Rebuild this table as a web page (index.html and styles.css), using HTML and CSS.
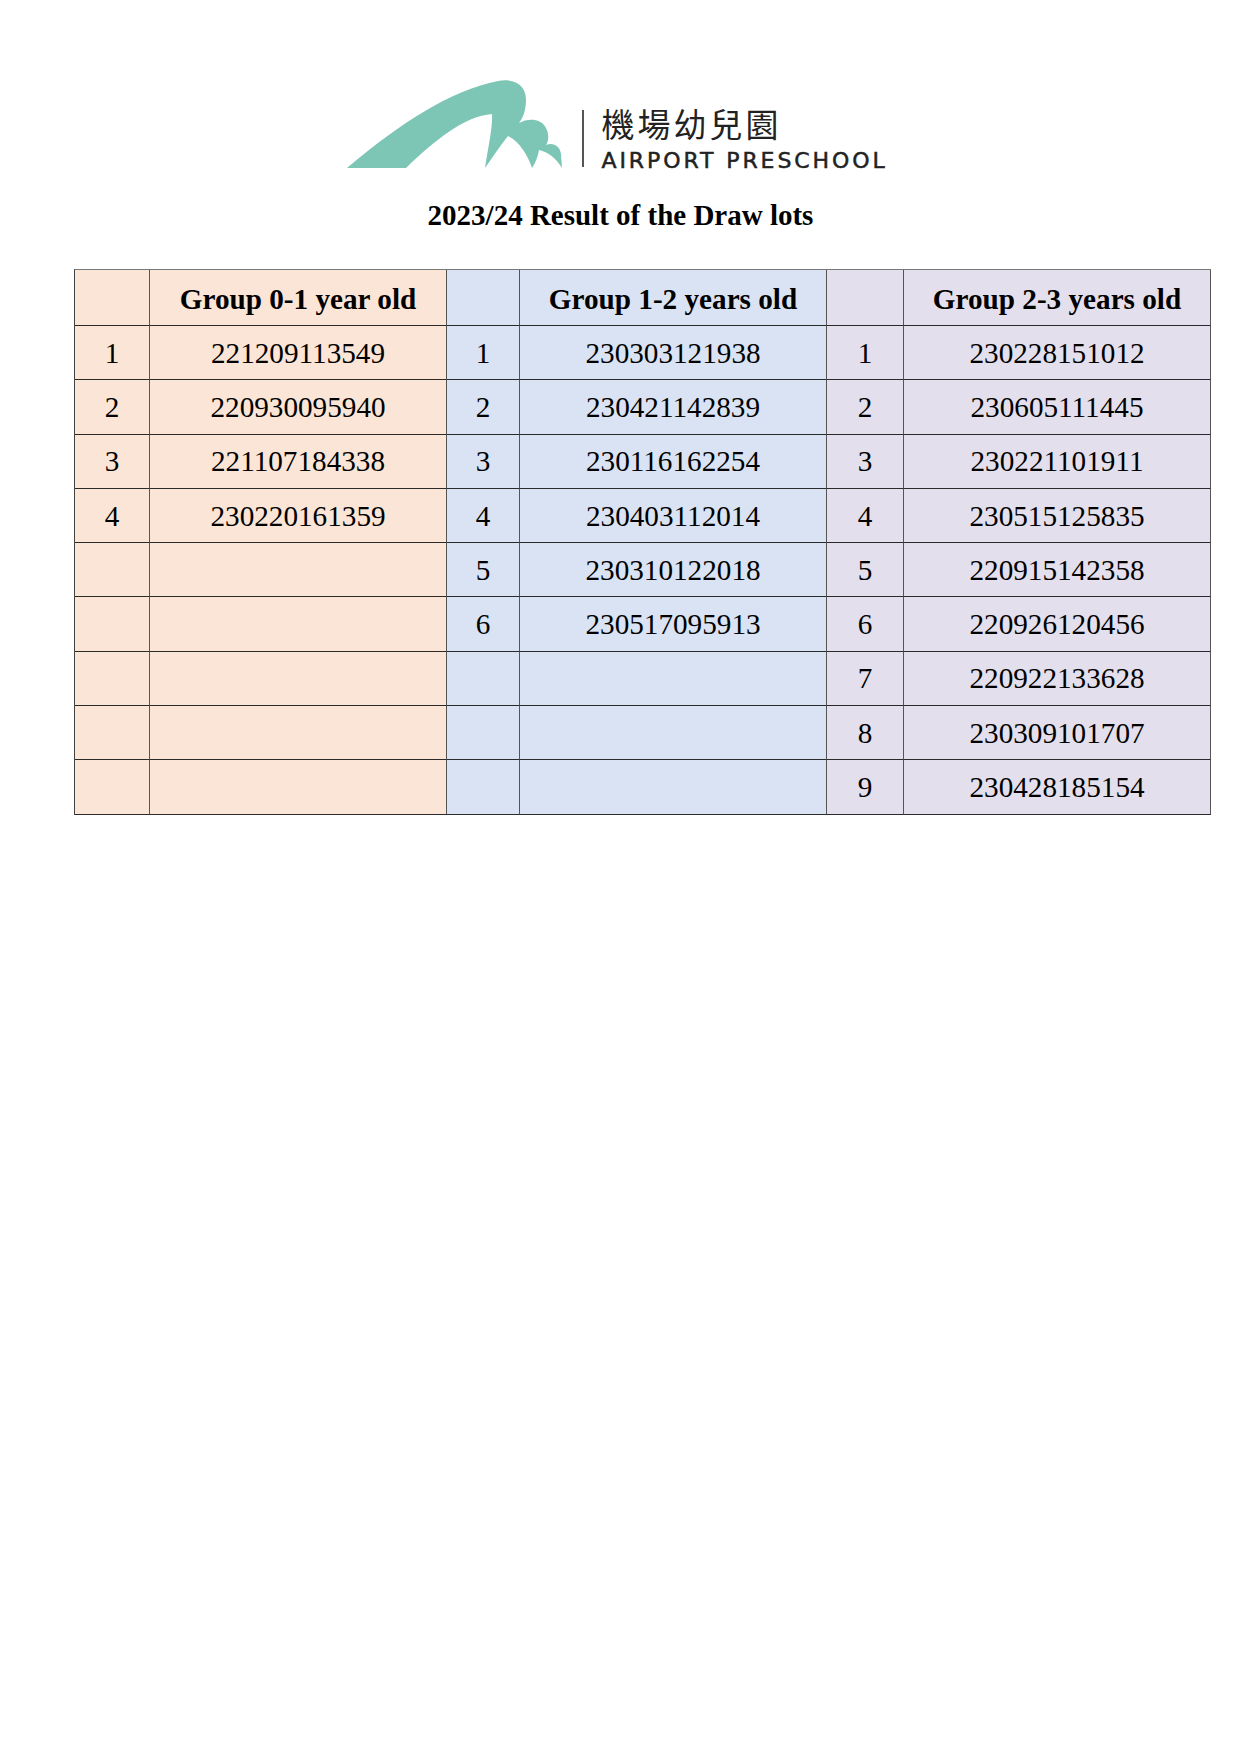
FILE: index.html
```html
<!DOCTYPE html>
<html lang="en">
<head>
<meta charset="utf-8">
<title>2023/24 Result of the Draw lots</title>
<link rel="stylesheet" href="styles.css">
</head>
<body>
<div class="page">
  <header class="logo">
    <svg class="logo-mark" width="230" height="95" viewBox="0 0 230 95" aria-hidden="true">
      <path fill="#7dc6b6" d="M 7 90 C 60 45, 112 12, 158 3 C 176 0, 186 8, 186 22 C 186 32, 183 40, 179 45 C 188 40, 201 40, 206 50 C 209 56, 209 62, 206 67 C 213 64, 220 68, 221 76 L 222 90 C 216 80, 208 74, 199 72 C 198 78, 196 84, 192 90 C 188 78, 180 64, 168 58 C 160 68, 152 80, 145 90 C 148 70, 153 48, 152 36 C 125 38, 95 62, 66 90 Z"/>
    </svg>
    <div class="logo-divider"></div>
    <div class="logo-text">
      <div class="logo-zh">機場幼兒園</div>
      <div class="logo-en">AIRPORT PRESCHOOL</div>
    </div>
  </header>

  <h1 class="title">2023/24 Result of the Draw lots</h1>

  <div class="results">
    <div class="cell peach"></div><div class="cell peach head">Group 0-1 year old</div>
    <div class="cell blue"></div><div class="cell blue head">Group 1-2 years old</div>
    <div class="cell lilac"></div><div class="cell lilac head">Group 2-3 years old</div>

    <div class="cell peach">1</div><div class="cell peach">221209113549</div>
    <div class="cell blue">1</div><div class="cell blue">230303121938</div>
    <div class="cell lilac">1</div><div class="cell lilac">230228151012</div>

    <div class="cell peach">2</div><div class="cell peach">220930095940</div>
    <div class="cell blue">2</div><div class="cell blue">230421142839</div>
    <div class="cell lilac">2</div><div class="cell lilac">230605111445</div>

    <div class="cell peach">3</div><div class="cell peach">221107184338</div>
    <div class="cell blue">3</div><div class="cell blue">230116162254</div>
    <div class="cell lilac">3</div><div class="cell lilac">230221101911</div>

    <div class="cell peach">4</div><div class="cell peach">230220161359</div>
    <div class="cell blue">4</div><div class="cell blue">230403112014</div>
    <div class="cell lilac">4</div><div class="cell lilac">230515125835</div>

    <div class="cell peach"></div><div class="cell peach"></div>
    <div class="cell blue">5</div><div class="cell blue">230310122018</div>
    <div class="cell lilac">5</div><div class="cell lilac">220915142358</div>

    <div class="cell peach"></div><div class="cell peach"></div>
    <div class="cell blue">6</div><div class="cell blue">230517095913</div>
    <div class="cell lilac">6</div><div class="cell lilac">220926120456</div>

    <div class="cell peach"></div><div class="cell peach"></div>
    <div class="cell blue"></div><div class="cell blue"></div>
    <div class="cell lilac">7</div><div class="cell lilac">220922133628</div>

    <div class="cell peach"></div><div class="cell peach"></div>
    <div class="cell blue"></div><div class="cell blue"></div>
    <div class="cell lilac">8</div><div class="cell lilac">230309101707</div>

    <div class="cell peach"></div><div class="cell peach"></div>
    <div class="cell blue"></div><div class="cell blue"></div>
    <div class="cell lilac">9</div><div class="cell lilac">230428185154</div>
  </div>
</div>
</body>
</html>
```

FILE: styles.css
```css
html, body {
  margin: 0;
  padding: 0;
  background: #ffffff;
}

body {
  font-family: "Liberation Serif", "Times New Roman", serif;
  color: #000000;
}

.page {
  width: 1241px;
  min-height: 1755px;
}

.logo {
  display: flex;
  align-items: flex-start;
  padding-top: 78px;
  padding-left: 340px;
  height: 95px;
}

.logo-mark {
  display: block;
  flex: none;
}

.logo-divider {
  flex: none;
  width: 1.5px;
  height: 57px;
  margin-top: 32px;
  margin-left: 12px;
  background: #555555;
}

.logo-text {
  margin-top: 27px;
  margin-left: 18px;
  display: flex;
  flex-direction: column;
  color: #222222;
}

.logo-zh {
  font-family: "Noto Sans CJK TC", "Noto Sans CJK SC", sans-serif;
  font-size: 33px;
  line-height: 36px;
  letter-spacing: 3px;
  font-weight: 400;
}

.logo-en {
  font-family: "DejaVu Sans", sans-serif;
  font-size: 22px;
  line-height: 22px;
  letter-spacing: 2.9px;
  margin-top: 9px;
  white-space: nowrap;
  -webkit-text-stroke: 0.5px #222222;
}

.title {
  margin: 25px 0 0 0;
  text-align: center;
  font-size: 29px;
  line-height: 34px;
  font-weight: bold;
}

.results {
  margin-top: 37px;
  margin-left: 74px;
  width: 1137px;
  box-sizing: border-box;
  display: grid;
  grid-template-columns: 75px 297px 73px 307px 77px 307px;
  grid-template-rows: 56px repeat(9, 54.3px);
  border-top: 1px solid #777777;
  border-left: 1px solid #444444;
}

.cell {
  box-sizing: border-box;
  border-right: 1px solid #555555;
  border-bottom: 1px solid #2a2a2a;
  display: flex;
  align-items: center;
  justify-content: center;
  padding-top: 0;
  font-size: 29.2px;
  line-height: 34px;
}

.head {
  font-weight: bold;
  padding-top: 2px;
}

.peach { background: #fbe5d6; }
.blue { background: #dae3f3; }
.lilac { background: #e4dfec; }
```
